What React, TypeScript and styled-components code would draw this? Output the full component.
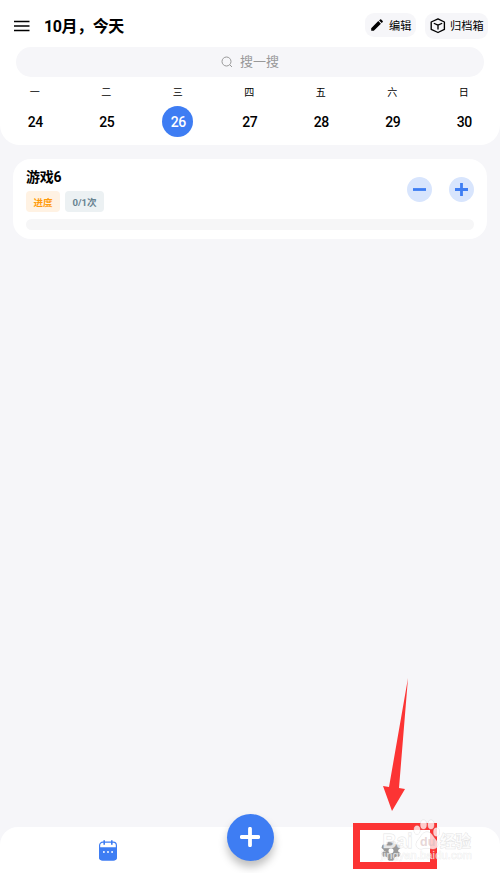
import React from "react";
import styled, { createGlobalStyle, css } from "styled-components";

const Global = createGlobalStyle`
  * { box-sizing: border-box; }
  html, body { margin: 0; padding: 0; }
  body { background: #f6f6f9; font-family: Roboto, "Noto Sans CJK SC", sans-serif; color: #000; }
  svg { display: block; flex: none; }
`;

const Screen = styled.div`
  position: relative;
  display: flex;
  flex-direction: column;
  width: 500px;
  height: 873px;
  overflow: hidden;
  background: #f6f6f9;
`;

const Header = styled.header`
  height: 145px;
  background: #fff;
  border-radius: 0 0 20px 20px;
`;

const TitleBar = styled.div`
  display: flex;
  align-items: center;
  height: 47px;
  padding: 5px 12px 0 14px;
`;

const Title = styled.h1`
  flex: 1;
  margin: 0 0 0 14px;
  padding-top: 2px;
  font-size: 16px;
  font-weight: 700;
  letter-spacing: -0.4px;
  line-height: 24px;
  white-space: nowrap;
`;

const Actions = styled.div`
  display: flex;
  align-items: flex-start;
  gap: 9px;
  height: 26px;
`;

const ActionButton = styled.button<{ $w: number; $h: number; $gap: number }>`
  display: flex;
  align-items: center;
  gap: ${(p) => p.$gap}px;
  width: ${(p) => p.$w}px;
  height: ${(p) => p.$h}px;
  padding: 0 0 0 5px;
  border: 0;
  border-radius: 9px;
  background: #f6f6f9;
  color: #000;
  font-family: inherit;
  font-size: 11.2px;
  font-weight: 400;
  line-height: 16px;
  white-space: nowrap;
`;

const ActionLabel = styled.span<{ $drop: number }>`
  padding-top: ${(p) => p.$drop}px;
`;

const SearchBox = styled.div`
  display: flex;
  align-items: center;
  justify-content: center;
  gap: 7px;
  height: 30px;
  margin: 0 16px;
  border-radius: 15px;
  background: #f6f6f9;
  color: #999;
  font-size: 13px;
  line-height: 20px;
`;

const Week = styled.div`
  display: grid;
  grid-template-columns: repeat(7, 71.5px);
  margin-left: -1px;
`;

const Day = styled.div`
  display: flex;
  flex-direction: column;
  align-items: center;
`;

const Weekday = styled.span`
  height: 29px;
  font-size: 10px;
  line-height: 32px;
`;

const DateMark = styled.span<{ $active: boolean }>`
  display: flex;
  align-items: center;
  justify-content: center;
  width: 31px;
  height: 31px;
  padding: 1px 0 0 1px;
  border-radius: 50%;
  font-size: 14px;
  font-weight: 500;
  letter-spacing: -0.4px;
  ${(p) =>
    p.$active &&
    css`
      background: #3e7df3;
      color: #fff;
    `}
`;

const Card = styled.section`
  height: 80px;
  margin: 14px 13px 0;
  padding: 8px 13px;
  border-radius: 18px;
  background: #fff;
`;

const CardTop = styled.div`
  display: flex;
  align-items: center;
  justify-content: space-between;
  height: 45px;
`;

const TaskName = styled.h2`
  margin: 0;
  height: 24px;
  font-size: 14px;
  font-weight: 700;
  letter-spacing: -0.2px;
  line-height: 21px;
`;

const Tags = styled.div`
  display: flex;
  gap: 5px;
`;

const Tag = styled.span<{ $w: number; $bg: string; $fg: string }>`
  display: flex;
  align-items: center;
  justify-content: center;
  width: ${(p) => p.$w}px;
  height: 21px;
  border-radius: 4px;
  background: ${(p) => p.$bg};
  color: ${(p) => p.$fg};
  font-size: 9.6px;
  font-weight: 700;
`;

const Stepper = styled.div`
  display: flex;
  gap: 17px;
`;

const RoundButton = styled.button`
  display: flex;
  align-items: center;
  justify-content: center;
  width: 25px;
  height: 25px;
  padding: 0;
  border: 0;
  border-radius: 50%;
  background: #d8e5fd;
`;

const Progress = styled.div`
  height: 11px;
  margin-top: 7px;
  border-radius: 6px;
  background: #f6f6f7;
`;

const TabBar = styled.nav`
  display: grid;
  grid-template-columns: 217px 66px 217px;
  justify-items: center;
  height: 46px;
  margin-top: auto;
  border-radius: 18px 18px 0 0;
  background: #fff;
`;

const Tab = styled.div<{ $shift?: number }>`
  padding-top: 13px;
  margin-left: ${(p) => p.$shift || 0}px;
`;

const AddButton = styled.button`
  display: flex;
  align-items: center;
  justify-content: center;
  width: 47px;
  height: 47px;
  margin-top: -13.5px;
  padding: 0;
  border: 0;
  border-radius: 50%;
  background: #3e7df3;
  box-shadow: 0 6px 9px rgba(0, 0, 0, 0.25);
`;

const Highlight = styled.div`
  position: absolute;
  left: 353px;
  top: 823px;
  width: 84px;
  height: 46px;
  border: 7px solid #fc3434;
`;

const Arrow = styled.svg`
  position: absolute;
  left: 380px;
  top: 676px;
`;

const Watermark = styled.svg`
  position: absolute;
  left: 376px;
  top: 814px;
  font-family: "Liberation Sans", "Noto Sans CJK SC", sans-serif;
`;

const MenuIcon = () => (
  <svg width="16" height="12" viewBox="0 0 16 12">
    <path d="M0 1.5h15.5M0 6h15.5M0 10.5h15.5" stroke="#000" strokeWidth="1.7" />
  </svg>
);

const PencilIcon = () => (
  <svg width="14" height="14" viewBox="0 0 14 14">
    <path d="M1.2 12.8V10.2L8.3 3.1l2.6 2.6-7.1 7.1zM9.1 2.4l1-1a.8.8 0 0 1 1.1 0l1.5 1.5a.8.8 0 0 1 0 1.1l-1 1z" />
  </svg>
);

const BoxIcon = () => (
  <svg width="16" height="16" viewBox="0 0 16 16" fill="none" stroke="#000" strokeWidth="1.35" strokeLinejoin="round" strokeLinecap="round">
    <path d="M8 .9 14.4 4v7.4L8 14.5 1.2 11.4V4zM4.3 5.5 8 7.2l3.7-1.7M8 7.2v3.9" />
  </svg>
);

const SearchIcon = () => (
  <svg width="12" height="12" viewBox="0 0 12 12" fill="none" stroke="#999" strokeWidth="1">
    <circle cx="5.5" cy="5.5" r="4.5" />
    <path d="m8.7 8.7 2.3 2.3" />
  </svg>
);

const CalendarIcon = () => (
  <svg width="18" height="21" viewBox="0 0 18 21">
    <rect x="0.6" y="2.2" width="16.8" height="17.7" rx="3.2" fill="#fff" stroke="#3e7df3" strokeWidth="1.2" />
    <path d="M0 7.2h18v9.9a3.5 3.5 0 0 1-3.5 3.5h-11A3.5 3.5 0 0 1 0 17.1z" fill="#3e7df3" />
    <path d="M5.2.2v4.6M12.8.2v4.6" stroke="#3e7df3" strokeWidth="1.6" />
    <path d="M4.2 12h1.4M8.3 12h1.4M12.4 12h1.4" stroke="#fff" strokeWidth="1.8" />
  </svg>
);

const GearIcon = () => (
  <svg width="20" height="21" viewBox="0 0 20 21">
    <path
      fill="#999"
      fillRule="evenodd"
      d="M8 1h4q1 0 1.2 1l.5 2 1.8.6 2-.2q.9 0 1.3 1l.6 1.8q.2.9-.6 1.4L17.2 10v1.4l1.6 1.3q.8.6.5 1.4l-.7 1.8q-.4.9-1.3.8l-2-.2-1.6.9-.6 2.2q-.3 1.1-1.3 1.1H8.2q-1 0-1.3-1.1l-.6-2.2-1.6-.9-2 .2q-.9.1-1.3-.8l-.7-1.8q-.3-.8.5-1.4l1.6-1.3V10L1.2 8.6Q.4 8.1.6 7.2l.6-1.8q.4-1 1.3-1l2 .2L6.3 4l.5-2Q7 1 8 1zM10 8.2a2.5 2.5 0 1 0 0 5 2.5 2.5 0 0 0 0-5z"
    />
  </svg>
);

const Plus = ({ size, color, stroke, round }: { size: number; color: string; stroke: number; round?: boolean }) => (
  <svg width={size} height={size} viewBox="0 0 20 20">
    <path d={round ? "M1.7 10h16.6M10 1.7v16.6" : "M0 10h20M10 0v20"} stroke={color} strokeWidth={stroke} strokeLinecap={round ? "round" : "butt"} />
  </svg>
);

const Minus = () => (
  <svg width="13" height="13" viewBox="0 0 13 13">
    <path d="M0 6.5h13" stroke="#3e7df3" strokeWidth="2.8" />
  </svg>
);

const days: [string, number][] = [
  ["一", 24],
  ["二", 25],
  ["三", 26],
  ["四", 27],
  ["五", 28],
  ["六", 29],
  ["日", 30],
];

export default function App() {
  return (
    <>
      <Global />
      <Screen>
        <Header>
          <TitleBar>
            <MenuIcon />
            <Title>10月，今天</Title>
            <Actions>
              <ActionButton $w={51} $h={24} $gap={5}>
                <PencilIcon />
                <ActionLabel $drop={3}>编辑</ActionLabel>
              </ActionButton>
              <ActionButton $w={63} $h={26} $gap={4}>
                <BoxIcon />
                <ActionLabel $drop={2}>归档箱</ActionLabel>
              </ActionButton>
            </Actions>
          </TitleBar>
          <SearchBox>
            <SearchIcon />
            搜一搜
          </SearchBox>
          <Week>
            {days.map(([name, date]) => (
              <Day key={date}>
                <Weekday>{name}</Weekday>
                <DateMark $active={date === 26}>{date}</DateMark>
              </Day>
            ))}
          </Week>
        </Header>

        <Card>
          <CardTop>
            <div>
              <TaskName>游戏6</TaskName>
              <Tags>
                <Tag $w={34} $bg="#fff2e3" $fg="#ff9b0b">进度</Tag>
                <Tag $w={39} $bg="#ecf1f3" $fg="#688391">0/1次</Tag>
              </Tags>
            </div>
            <Stepper>
              <RoundButton>
                <Minus />
              </RoundButton>
              <RoundButton>
                <Plus size={13} color="#3e7df3" stroke={4.3} />
              </RoundButton>
            </Stepper>
          </CardTop>
          <Progress />
        </Card>

        <TabBar>
          <Tab $shift={-1}>
            <CalendarIcon />
          </Tab>
          <AddButton>
            <Plus size={20} color="#fff" stroke={3.8} round />
          </AddButton>
          <Tab $shift={-2}>
            <GearIcon />
          </Tab>
        </TabBar>

        <Arrow width="30" height="138" viewBox="0 0 30 138">
          <path d="M28 2 19 112l6 1-13 22-9-25 6 1z" fill="#fc3434" />
        </Arrow>
        <Highlight />
        <Watermark width="104" height="52" viewBox="0 0 104 52">
          <g fill="#fff" fillOpacity="0.75" stroke="#c8c8c8" strokeOpacity="0.5" strokeWidth="0.9" paintOrder="stroke">
            <text x="6.5" y="33.5" fontSize="21" fontWeight="700" textLength="30" lengthAdjust="spacingAndGlyphs">Bai</text>
            <ellipse cx="41" cy="16" rx="3" ry="4.2" />
            <ellipse cx="47.5" cy="10.5" rx="3" ry="4.5" />
            <ellipse cx="55" cy="10.5" rx="3" ry="4.5" />
            <ellipse cx="60.5" cy="18" rx="3" ry="4.2" />
            <path d="M51 18c5 0 6 5 9 8 4 5 1 9-3 9-4-1-8-1-12 0-4 0-7-4-3-9 3-3 4-8 9-8z" />
            <text x="64" y="32.5" fontSize="15.5" fontWeight="700" textLength="31">经验</text>
          </g>
          <text x="5" y="45" fontSize="11" textLength="91" fill="#fff" fillOpacity="0.7" stroke="#c8c8c8" strokeOpacity="0.4" strokeWidth="0.6" paintOrder="stroke">jingyan.baidu.com</text>
          <text x="44" y="32" fontSize="12.5" fontWeight="700" fill="#d9bfc0" fillOpacity="0.65">du</text>
        </Watermark>
      </Screen>
    </>
  );
}
